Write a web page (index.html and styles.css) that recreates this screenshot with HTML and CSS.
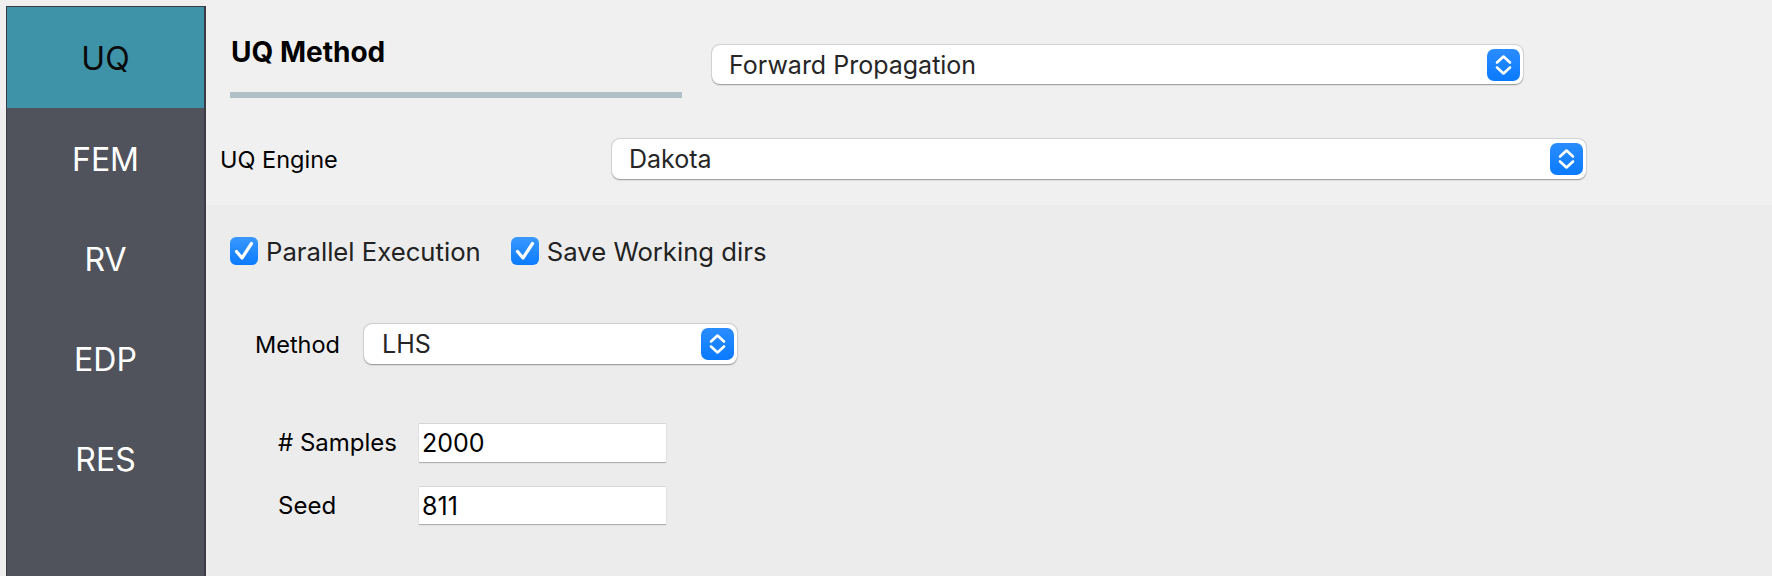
FILE: index.html
```html
<!DOCTYPE html>
<html>
<head>
<meta charset="utf-8">
<link rel="stylesheet" href="styles.css">
</head>
<body>
<div class="app">
  <nav class="sidebar">
    <div class="tab tab-active">UQ</div>
    <div class="tab">FEM</div>
    <div class="tab">RV</div>
    <div class="tab">EDP</div>
    <div class="tab">RES</div>
  </nav>
  <main class="main">
    <section class="top">
      <div class="method-row">
        <div class="title-block">
          <h1 class="title">UQ Method</h1>
          <div class="title-bar"></div>
        </div>
        <div class="combo combo-method">
          <span class="combo-text">Forward Propagation</span>
          <span class="stepper">
            <svg viewBox="0 0 33 32" width="33" height="32"><path d="M10 13.5 L16.5 7.5 L23 13.5 M10 18.5 L16.5 24.5 L23 18.5" fill="none" stroke="#fff" stroke-width="2.6" stroke-linecap="round" stroke-linejoin="round"/></svg>
          </span>
        </div>
      </div>
      <div class="engine-row">
        <span class="label label-engine">UQ Engine</span>
        <div class="combo combo-engine">
          <span class="combo-text">Dakota</span>
          <span class="stepper">
            <svg viewBox="0 0 33 32" width="33" height="32"><path d="M10 13.5 L16.5 7.5 L23 13.5 M10 18.5 L16.5 24.5 L23 18.5" fill="none" stroke="#fff" stroke-width="2.6" stroke-linecap="round" stroke-linejoin="round"/></svg>
          </span>
        </div>
      </div>
    </section>
    <section class="bottom">
      <div class="checks-row">
        <label class="check">
          <span class="box"><svg viewBox="0 0 28 28" width="28" height="28"><path d="M6.5 14.5 L12 21 L21.5 6.5" fill="none" stroke="#fff" stroke-width="3.2" stroke-linecap="round" stroke-linejoin="round"/></svg></span>
          <span class="check-text">Parallel Execution</span>
        </label>
        <label class="check">
          <span class="box"><svg viewBox="0 0 28 28" width="28" height="28"><path d="M6.5 14.5 L12 21 L21.5 6.5" fill="none" stroke="#fff" stroke-width="3.2" stroke-linecap="round" stroke-linejoin="round"/></svg></span>
          <span class="check-text">Save Working dirs</span>
        </label>
      </div>
      <div class="lhs-row">
        <span class="label label-method">Method</span>
        <div class="combo combo-lhs">
          <span class="combo-text">LHS</span>
          <span class="stepper">
            <svg viewBox="0 0 33 32" width="33" height="32"><path d="M10 13.5 L16.5 7.5 L23 13.5 M10 18.5 L16.5 24.5 L23 18.5" fill="none" stroke="#fff" stroke-width="2.6" stroke-linecap="round" stroke-linejoin="round"/></svg>
          </span>
        </div>
      </div>
      <div class="field-row field-samples">
        <span class="label label-field">#&nbsp;Samples</span>
        <div class="input input-samples">2000</div>
      </div>
      <div class="field-row field-seed">
        <span class="label label-field">Seed</span>
        <div class="input input-seed">811</div>
      </div>
    </section>
  </main>
</div>
</body>
</html>
```
FILE: styles.css
```css
* { box-sizing: border-box; }
html, body { margin: 0; padding: 0; }
body {
  background: #efefef;
  font-family: Inter, "Noto Sans", "Liberation Sans", sans-serif;
  color: #111;
  width: 1772px;
  height: 576px;
  overflow: hidden;
}
.app {
  display: flex;
  height: 576px;
  overflow: hidden;
}
.sidebar {
  margin: 6px 0 0 6px;
  width: 200px;
  flex: 0 0 200px;
  height: 570px;
  background: #50535b;
  border: 1px solid #3b3d42;
  border-right: 2px solid #3b3d42;
  border-bottom: none;
  display: flex;
  flex-direction: column;
}
.tab {
  height: 100px;
  flex: 0 0 100px;
  display: flex;
  align-items: center;
  justify-content: center;
  color: #fff;
  font-size: 32px;
  padding-top: 2px;
}
.tab-active {
  background: #3f93a9;
  color: #0a0a0a;
  flex-basis: 101px;
  height: 101px;
}
.main {
  flex: 1;
  display: flex;
  flex-direction: column;
}
.top {
  background: #f0f0f0;
  padding: 36px 0 26px 0;
}
.method-row {
  display: flex;
  align-items: flex-start;
  padding-left: 24px;
}
.title-block {
  width: 452px;
}
.title {
  margin: 0;
  padding-left: 1px;
  font-size: 28px;
  line-height: 32px;
  font-weight: 700;
  color: #000;
}
.title-bar {
  margin-top: 24px;
  height: 6px;
  background: #b1bfc7;
}
.combo {
  background: #fff;
  border-radius: 8px;
  box-shadow: 0 0.5px 1.5px rgba(0,0,0,0.35), 0 0 0 1px rgba(0,0,0,0.06);
  display: flex;
  align-items: center;
  justify-content: space-between;
  padding: 0 3px 0 17px;
}
.combo-text {
  font-size: 25px;
  color: #262626;
}
.combo-method {
  margin-left: 30px;
  margin-top: 9px;
  width: 811px;
  height: 39px;
}
.stepper {
  width: 33px;
  height: 32px;
  border-radius: 7px;
  background: linear-gradient(#2a8dff, #0a7aff);
  display: flex;
}
.engine-row {
  margin-top: 41px;
  display: flex;
  align-items: center;
  padding-left: 14px;
}
.label {
  font-size: 23.5px;
  color: #000;
}
.label-engine { width: 392px; }
.combo-engine {
  width: 974px;
  height: 40px;
}
.bottom {
  flex: 1;
  background: #ececec;
  padding-top: 32px;
}
.checks-row {
  display: flex;
  align-items: center;
  gap: 30px;
  padding-left: 24px;
  height: 28px;
}
.check {
  display: flex;
  align-items: center;
  gap: 8px;
}
.box {
  width: 28px;
  height: 28px;
  border-radius: 6px;
  background: linear-gradient(#3a98ff, #0b7bff);
  display: flex;
}
.check-text {
  font-size: 25.7px;
  color: #222;
}
.lhs-row {
  margin-top: 59px;
  display: flex;
  align-items: center;
  padding-left: 49px;
}
.label-method { width: 109px; }
.combo-lhs {
  width: 373px;
  height: 40px;
  padding-left: 18px;
}
.field-row {
  display: flex;
  align-items: center;
  padding-left: 72px;
}
.field-samples { margin-top: 59px; }
.field-seed { margin-top: 24px; }
.label-field {
  width: 141px;
  font-size: 24px;
}
.input {
  width: 247px;
  background: #fff;
  border-top: 1px solid #d6d6d6;
  box-shadow: 0 1px 1px rgba(0,0,0,0.25);
  font-size: 25px;
  color: #000;
  padding-left: 3px;
  display: flex;
  align-items: center;
}
.input-samples { height: 39px; }
.input-seed { height: 38px; }
```
